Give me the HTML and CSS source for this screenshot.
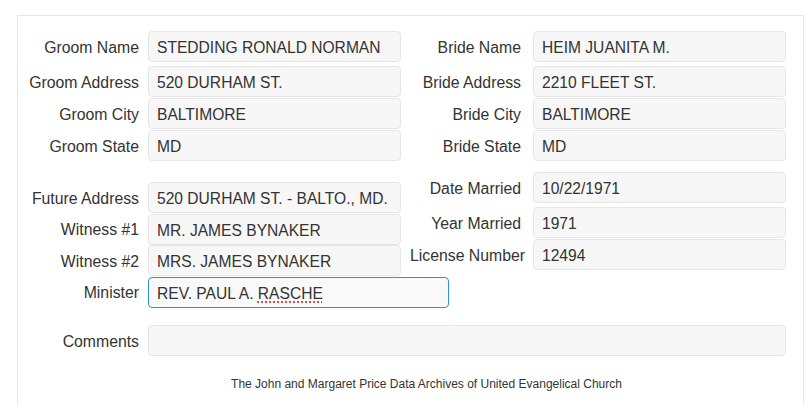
FILE: index.html
```html
<!DOCTYPE html>
<html>
<head>
<meta charset="utf-8">
<link rel="stylesheet" href="styles.css">
</head>
<body>
<div class="panel">
  <div class="section">
    <div class="col col-left">
      <div class="row first"><label>Groom Name</label><div class="field">STEDDING RONALD NORMAN</div></div>
      <div class="row"><label>Groom Address</label><div class="field">520 DURHAM ST.</div></div>
      <div class="row"><label>Groom City</label><div class="field">BALTIMORE</div></div>
      <div class="row"><label>Groom State</label><div class="field">MD</div></div>
    </div>
    <div class="col col-right">
      <div class="row first"><label>Bride Name</label><div class="field">HEIM JUANITA M.</div></div>
      <div class="row"><label>Bride Address</label><div class="field">2210 FLEET ST.</div></div>
      <div class="row"><label>Bride City</label><div class="field">BALTIMORE</div></div>
      <div class="row"><label>Bride State</label><div class="field">MD</div></div>
    </div>
  </div>
  <div class="section second">
    <div class="col col-left lower">
      <div class="row tight"><label>Future Address</label><div class="field">520 DURHAM ST. - BALTO., MD.</div></div>
      <div class="row tight"><label>Witness #1</label><div class="field">MR. JAMES BYNAKER</div></div>
      <div class="row tight"><label>Witness #2</label><div class="field">MRS. JAMES BYNAKER</div></div>
      <div class="row tight"><label>Minister</label><div class="field focus">REV. PAUL A. <span class="spell">RASCHE</span></div></div>
    </div>
    <div class="col col-right upper">
      <div class="row first"><label>Date Married</label><div class="field">10/22/1971</div></div>
      <div class="row"><label>Year Married</label><div class="field">1971</div></div>
      <div class="row"><label class="narrow">License Number</label><div class="field">12494</div></div>
    </div>
  </div>
  <div class="comments-row">
    <label>Comments</label><div class="field wide"></div>
  </div>
  <div class="footer">The John and Margaret Price Data Archives of United Evangelical Church</div>
</div>
</body>
</html>
```

FILE: styles.css
```css
html, body {
  margin: 0;
  padding: 0;
  background: #ffffff;
}
body {
  font-family: "Liberation Sans", Arial, sans-serif;
  color: #333333;
  overflow: hidden;
}
.panel {
  box-sizing: border-box;
  margin: 15px 0 0 17px;
  width: 787px;
  height: 390px;
  border: 1px solid #e5e5e5;
  border-bottom: none;
  background: #ffffff;
  padding-top: 15px;
}
.section {
  display: flex;
}
.col {
  display: flex;
  flex-direction: column;
  flex-shrink: 0;
}
.col-left {
  width: 383px;
}
.col-right {
  width: 385px;
}
.row {
  display: flex;
  align-items: center;
  height: 31px;
  margin-bottom: 1px;
}
.row.first {
  margin-bottom: 4px;
}
.row.tight {
  margin-bottom: 0.5px;
}
label {
  flex-shrink: 0;
  font-size: 15.8px;
  padding-top: 2px;
  text-align: right;
  white-space: nowrap;
}
.col-left label {
  width: 121px;
  margin-right: 9px;
}
.col-right label {
  width: 120px;
  margin-right: 12px;
}
.col-right label.narrow {
  width: 130px;
  margin-left: -6px;
  margin-right: 8px;
}
.field {
  box-sizing: border-box;
  flex-shrink: 0;
  width: 253px;
  height: 31px;
  border: 1px solid #e6e6e6;
  border-radius: 4px;
  background: #f7f7f7;
  padding: 2px 8px 0;
  font-size: 15.6px;
  line-height: 27px;
  white-space: nowrap;
  overflow: hidden;
}
.field.focus {
  width: 301px;
  border-color: #2b95d6;
  background: #f9f9f9;
}
.spell {
  text-decoration: underline dotted #d21f1f;
  text-underline-offset: 3px;
}
.second {
  align-items: flex-start;
}
.lower {
  margin-top: 20px;
}
.upper {
  margin-top: 10px;
}
.comments-row {
  display: flex;
  align-items: center;
  margin-top: 17px;
}
.comments-row label {
  width: 121px;
  margin-right: 9px;
}
.field.wide {
  width: 638px;
}
.footer {
  margin-top: 21px;
  padding-left: 32px;
  text-align: center;
  font-size: 12px;
  color: #333333;
}
```
